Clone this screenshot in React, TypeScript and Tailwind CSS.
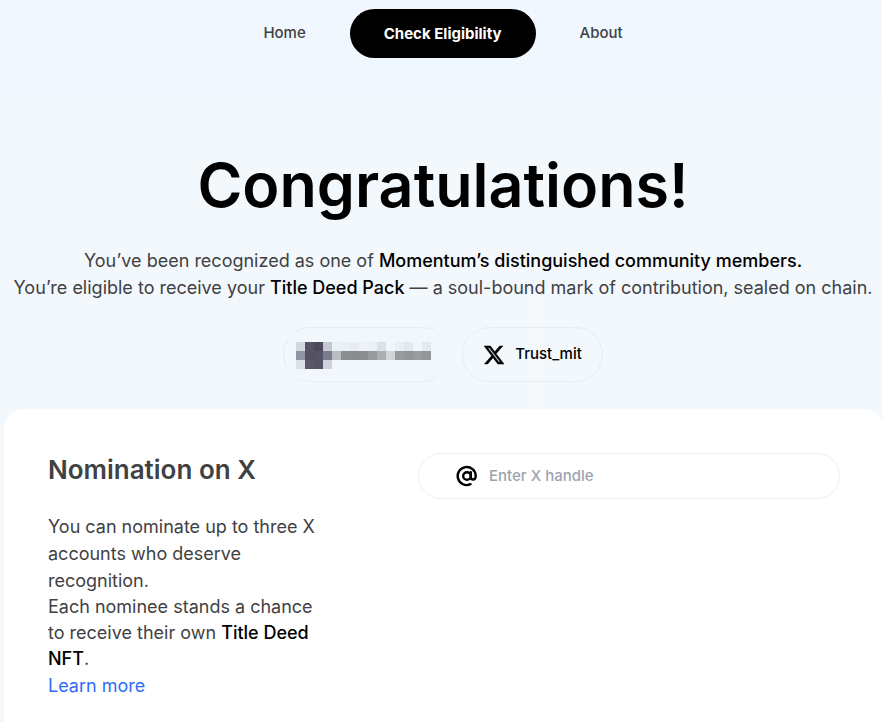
import { FaXTwitter } from 'react-icons/fa6';

// 9px mosaic that masks the wallet address
const mosaic = [
  ['#d3d9e1', '#555366', '#4c4a5c', '#c3c9d1', '#eaf1f6', '#eaf0f5', '#e7edf2', '#ecf2f7', '#eaf1f6', '#dbe2e6', '#f0f7fc', '#e9eff4', '#e4e9ef', '#f0f7fc', '#e4e9ef'],
  ['#9095a2', '#535163', '#555366', '#7b7c8b', '#b9bdc1', '#8a8e90', '#8a8d8e', '#8a8e8f', '#979b9d', '#abafb2', '#cfd5d9', '#979b9d', '#919698', '#989c9f', '#919698'],
  ['#dbe1e7', '#595769', '#545264', '#ced2db'],
];

function AddressMosaic() {
  return (
    <svg className="shrink-0" width="162" height="45" viewBox="0 0 162 45" role="img" aria-label="Hidden wallet address" shapeRendering="crispEdges">
      <rect width="162" height="45" fill="#f2f7fb" />
      {mosaic.map((row, y) =>
        row.map((fill, x) => <rect key={`${x}-${y}`} x={8 + x * 9} y={9 + y * 9} width="9" height="9" fill={fill} />),
      )}
    </svg>
  );
}

function AtIcon() {
  return (
    <svg className="shrink-0" width="24" height="24" viewBox="0 0 24 24" fill="none" stroke="black" strokeWidth="2.4" strokeLinecap="round" strokeLinejoin="round" aria-hidden="true">
      <circle cx="12" cy="12" r="3.8" />
      <path d="M15.8 8.3v4.6c0 1.6.9 2.6 2.3 2.6s2.6-1.1 2.6-3.5a9 9 0 1 0-5.2 8.2" />
    </svg>
  );
}

export default function App() {
  return (
    <div className="min-h-screen flex flex-col overflow-x-hidden bg-[#f3f8fc] font-['Inter','Liberation_Sans',sans-serif] text-[#3f4143]">
      <header className="bg-[#f0f7fe] pt-[9px] pb-[39px]">
        <nav className="flex items-center justify-center gap-11 pl-1 text-[15px] font-medium">
          <a href="#">Home</a>
          <a href="#" className="rounded-full bg-black px-[34px] py-3 leading-[25px] font-bold text-white">Check Eligibility</a>
          <a href="#">About</a>
        </nav>
      </header>

      <section className="flex flex-col items-center bg-[linear-gradient(to_right,transparent,#f7f8fc,transparent)] bg-[size:12px_110px] bg-[position:61%_100%] bg-no-repeat pt-12 pb-[27px] pl-1 text-center">
        <h1 className="text-[61px] leading-20 font-semibold text-black">Congratulations!</h1>
        <p className="mt-[22px] text-lg leading-[27px]">
          You’ve been recognized as one of <strong className="font-medium text-black">Momentum’s distinguished community members.</strong>
          <br />
          You’re eligible to receive your <strong className="font-medium text-black">Title Deed Pack</strong> — a soul-bound mark of contribution, sealed on chain.
        </p>
        <div className="mt-[26px] flex gap-3">
          <div className="flex h-[55px] w-[167px] items-start rounded-full border border-[#e7ecf0] pt-[5px] pl-1">
            <AddressMosaic />
          </div>
          <div className="flex h-[55px] items-center gap-2.5 rounded-full border border-[#e7ecf0] px-5 text-[15px] font-medium text-black">
            <FaXTwitter size={22} stroke="black" strokeWidth={14} aria-hidden="true" />
            Trust_mit
          </div>
        </div>
      </section>

      <main className="-mr-0.5 ml-1 grid grow content-start gap-10 rounded-t-[20px] bg-white px-11 pt-11 pb-6 md:grid-cols-[280px_1fr] md:gap-[90px]">
        <div>
          <h2 className="text-[26px] leading-[34px] font-semibold">Nomination on X</h2>
          <p className="mt-[26px] text-lg leading-[27px]">
            You can nominate up to three X accounts who deserve recognition.
          </p>
          <p className="text-lg leading-[26px]">
            Each nominee stands a chance to receive their own <strong className="font-medium text-black">Title Deed NFT</strong>.
          </p>
          <a href="#" className="text-lg leading-[27px] text-[#2f6df6]">Learn more</a>
        </div>
        <label className="flex h-[46px] items-center gap-2.5 rounded-full border border-[#eeeeee] px-9">
          <AtIcon />
          <input type="text" aria-label="X handle" placeholder="Enter X handle" className="min-w-0 grow text-[15px] font-medium outline-none placeholder:text-[#9ca3af]" />
        </label>
      </main>
    </div>
  );
}
